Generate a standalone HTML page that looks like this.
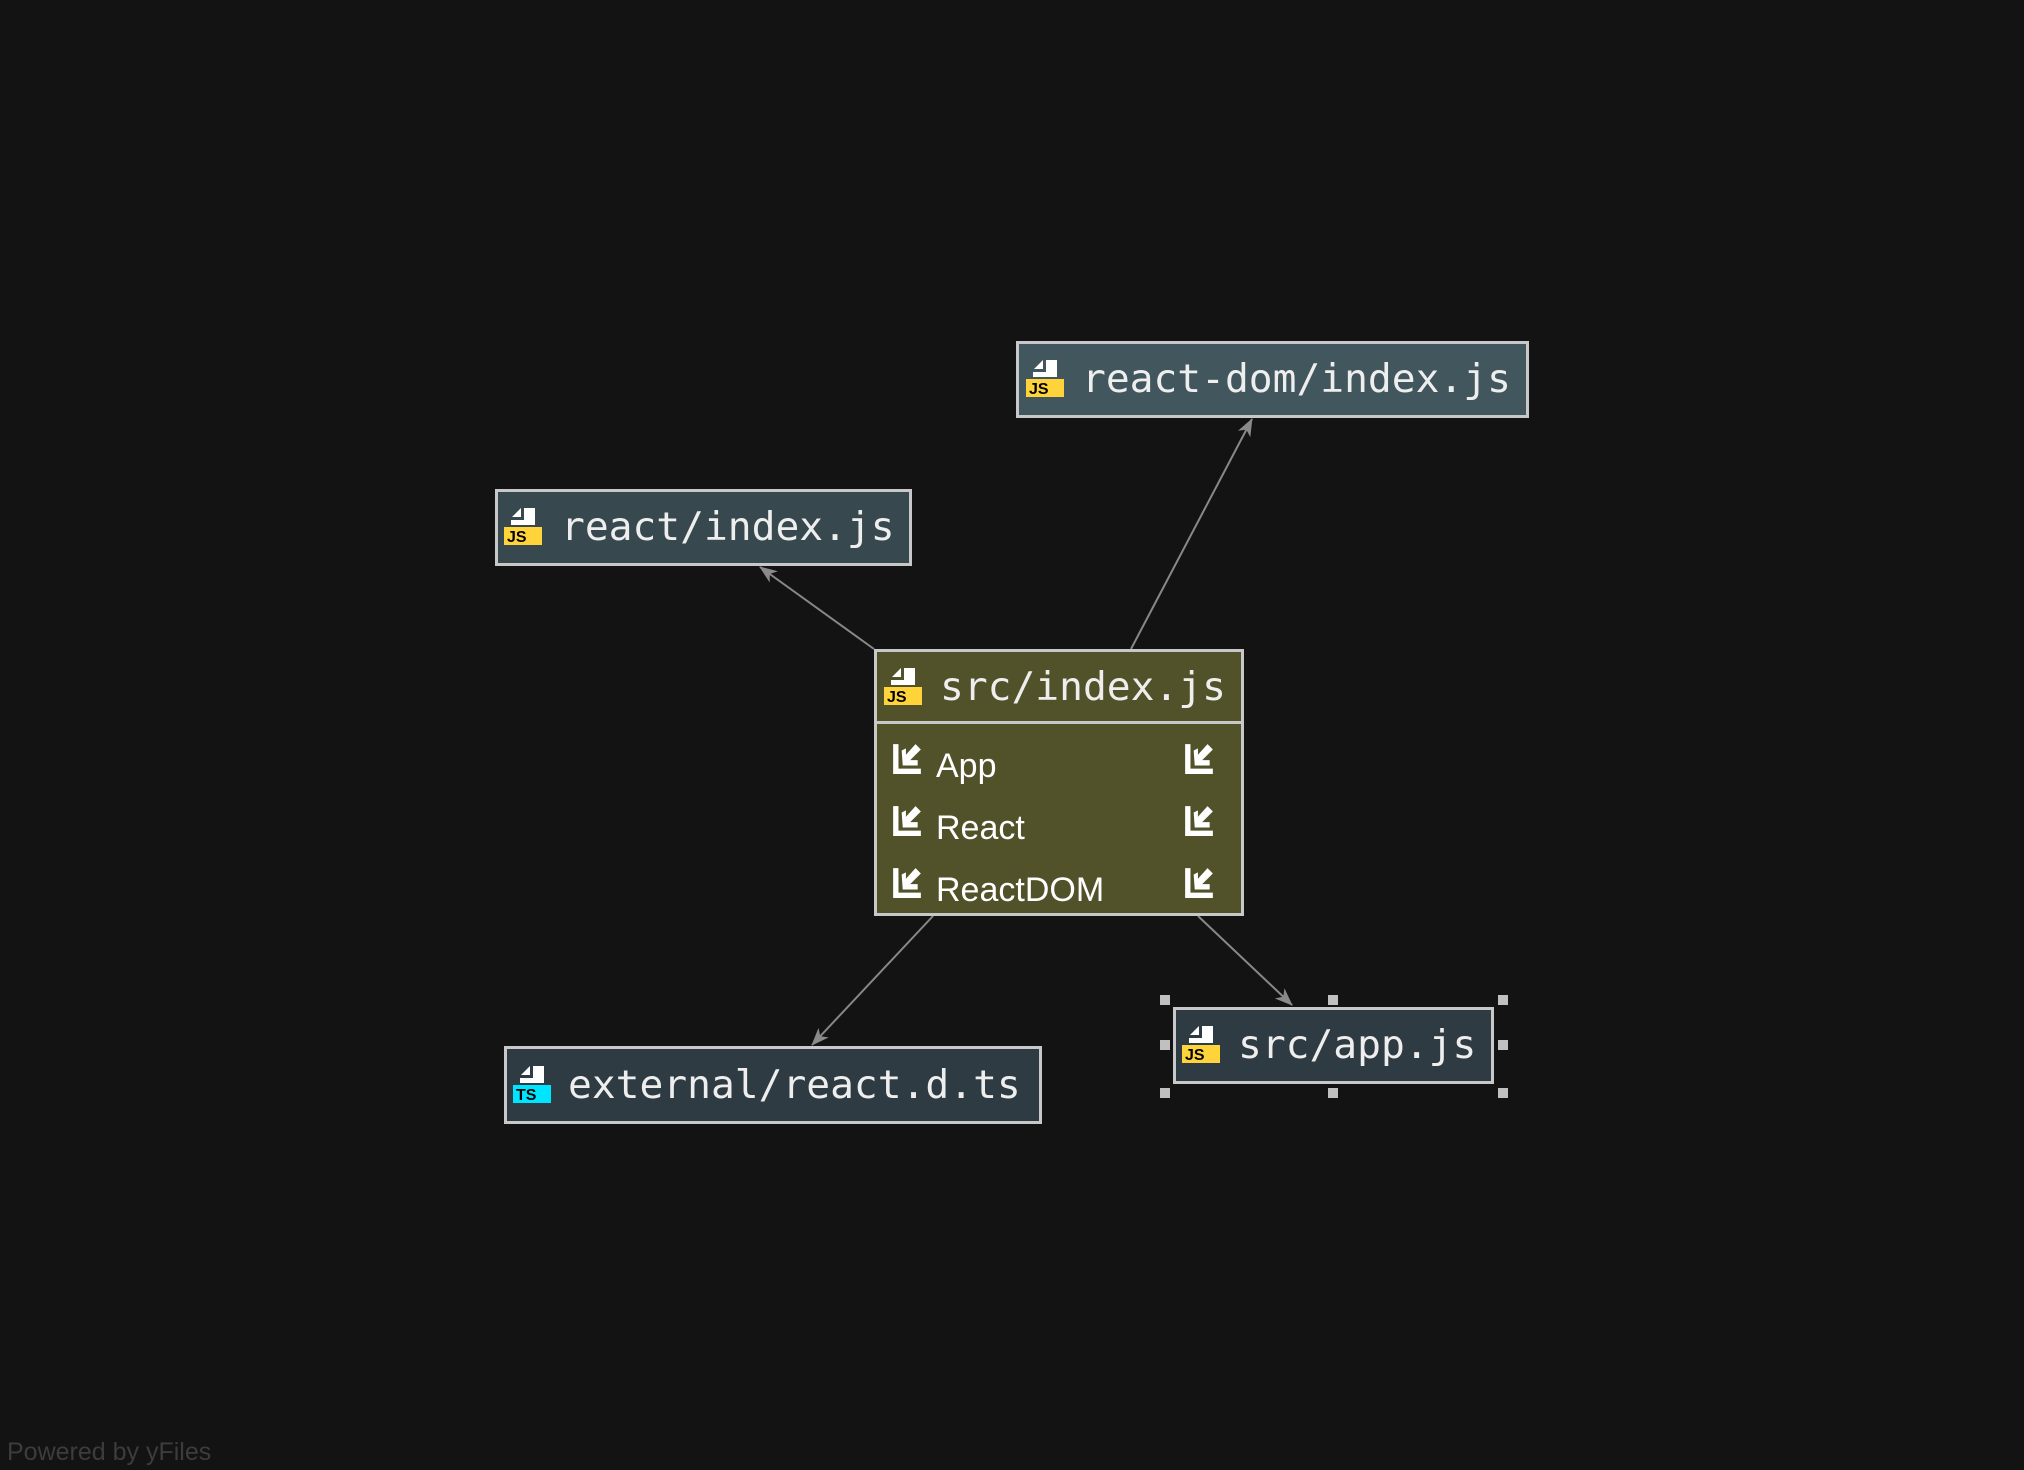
<!DOCTYPE html>
<html><head><meta charset="utf-8"><style>
html,body{margin:0;padding:0;background:#131313;width:2024px;height:1470px;overflow:hidden;position:relative;font-family:"Liberation Sans",sans-serif}
.n{position:absolute;box-sizing:border-box;border:3px solid #c8c8c8;}
.t{position:absolute;font-family:"DejaVu Sans Mono","Liberation Mono",monospace;font-size:39.6px;color:#eee;white-space:nowrap;line-height:1}
.ic{position:absolute;width:38px;height:38px}
.m{position:absolute;font-size:34px;color:#fff;line-height:1}
.h{position:absolute;width:10px;height:10px;background:#c0c0c0}
</style></head><body>
<svg width="2024" height="1470" style="position:absolute;left:0;top:0">
<defs><marker id="a" markerWidth="18" markerHeight="14" refX="17" refY="7" orient="auto" markerUnits="userSpaceOnUse" viewBox="0 0 18 14"><path d="M0,0 L18,7 L0,14 L5,7z" fill="#8a8a8a"/></marker></defs>
<g stroke="#888" stroke-width="2" fill="none">
<line x1="874" y1="649" x2="760" y2="567" marker-end="url(#a)" />
<line x1="1131" y1="649" x2="1252" y2="419" marker-end="url(#a)"/>
<line x1="933" y1="916" x2="812" y2="1045" marker-end="url(#a)"/>
<line x1="1198" y1="916" x2="1292" y2="1005" marker-end="url(#a)"/>
</g>
<symbol id="js" viewBox="0 0 38 38"><path d="M17 0 L8 9 L17 9Z M20 0 H31 V17 H7 V12 H20Z" fill="#fff"/><rect x="0" y="19" width="38" height="18" fill="#ffd43b"/><text x="3" y="34" font-family="Liberation Sans" font-size="16" font-weight="bold" fill="#000">JS</text></symbol>
<symbol id="ts" viewBox="0 0 38 38"><path d="M17 0 L8 9 L17 9Z M20 0 H31 V17 H7 V12 H20Z" fill="#fff"/><rect x="0" y="19" width="38" height="18" fill="#00e5ff"/><text x="3" y="34" font-family="Liberation Sans" font-size="16" font-weight="bold" fill="#000">TS</text></symbol>
<symbol id="imp" viewBox="0 0 26 30"><path d="M0 2 H5 V25 H26 V30 H0Z M8 8 L9 22 H23 V17 H16 L26 7 L21 2 L12 12 V6Z" fill="#fff"/></symbol>
</svg>

<div class="n" style="left:1016px;top:341px;width:513px;height:77px;background:#41575d"></div>
<svg class="ic" style="left:1026px;top:360px"><use href="#js"/></svg>
<div class="t" style="left:1082px;top:360px">react-dom/index.js</div>

<div class="n" style="left:495px;top:489px;width:417px;height:77px;background:#37494f"></div>
<svg class="ic" style="left:504px;top:508px"><use href="#js"/></svg>
<div class="t" style="left:561px;top:508px">react/index.js</div>

<div class="n" style="left:874px;top:649px;width:370px;height:267px;background:#52522a"></div>
<div style="position:absolute;left:877px;top:721px;width:364px;height:3px;background:#c8c8c8"></div>
<svg class="ic" style="left:884px;top:668px"><use href="#js"/></svg>
<div class="t" style="left:940px;top:668px">src/index.js</div>
<svg style="position:absolute;left:893px;top:742px;width:28px;height:32px"><use href="#imp"/></svg>
<svg style="position:absolute;left:1185px;top:742px;width:28px;height:32px"><use href="#imp"/></svg>
<svg style="position:absolute;left:893px;top:804px;width:28px;height:32px"><use href="#imp"/></svg>
<svg style="position:absolute;left:1185px;top:804px;width:28px;height:32px"><use href="#imp"/></svg>
<svg style="position:absolute;left:893px;top:866px;width:28px;height:32px"><use href="#imp"/></svg>
<svg style="position:absolute;left:1185px;top:866px;width:28px;height:32px"><use href="#imp"/></svg>
<div class="m" style="left:936px;top:749px">App</div>
<div class="m" style="left:936px;top:811px">React</div>
<div class="m" style="left:936px;top:873px">ReactDOM</div>

<div class="n" style="left:504px;top:1046px;width:538px;height:78px;background:#2e3b42"></div>
<svg class="ic" style="left:513px;top:1066px"><use href="#ts"/></svg>
<div class="t" style="left:568px;top:1066px">external/react.d.ts</div>

<div class="n" style="left:1173px;top:1007px;width:321px;height:77px;background:#2e3b42"></div>
<svg class="ic" style="left:1182px;top:1026px"><use href="#js"/></svg>
<div class="t" style="left:1238px;top:1026px">src/app.js</div>
<div class="h" style="left:1160px;top:995px"></div><div class="h" style="left:1328px;top:995px"></div><div class="h" style="left:1498px;top:995px"></div>
<div class="h" style="left:1160px;top:1040px"></div><div class="h" style="left:1498px;top:1040px"></div>
<div class="h" style="left:1160px;top:1088px"></div><div class="h" style="left:1328px;top:1088px"></div><div class="h" style="left:1498px;top:1088px"></div>

<div style="position:absolute;left:7px;top:1438px;font-size:25px;color:#3c3c3c">Powered by yFiles</div>
</body></html>
